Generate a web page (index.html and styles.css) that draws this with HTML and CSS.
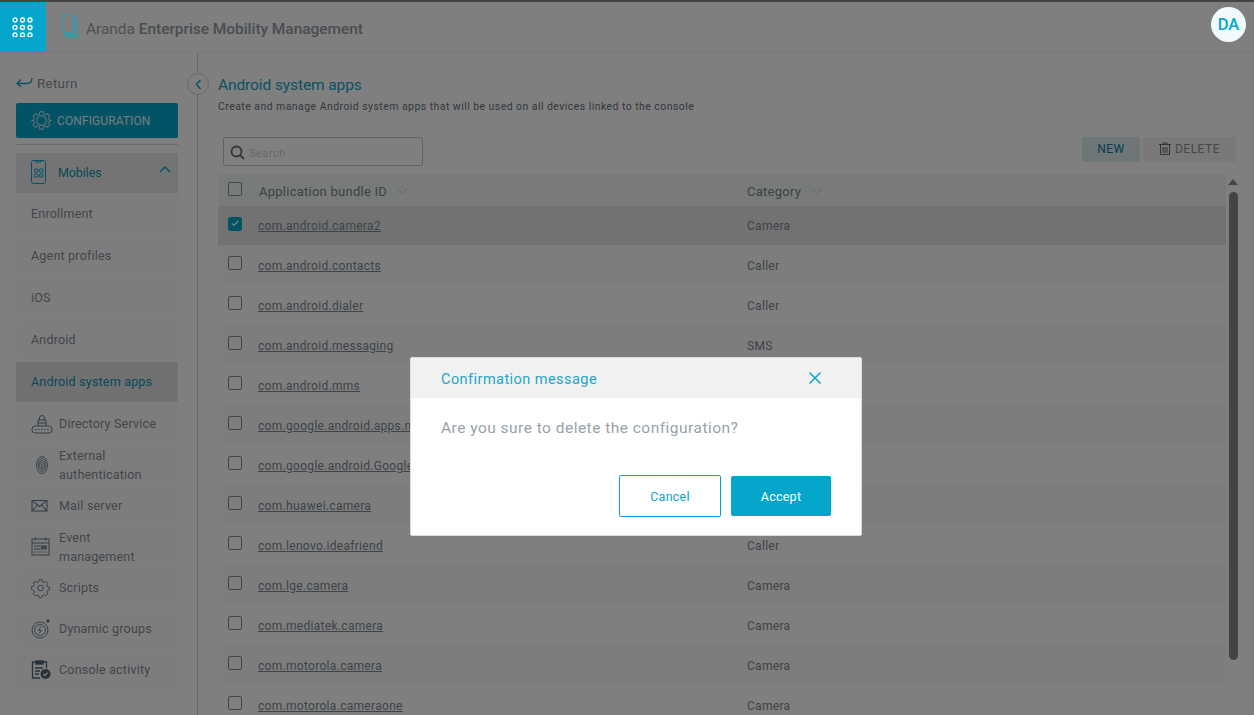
FILE: index.html
```html
<!DOCTYPE html>
<html lang="en">
<head>
<meta charset="utf-8">
<title>Android system apps</title>
<link rel="stylesheet" href="styles.css">
</head>
<body>
<div class="app">
  <header class="topbar">
    <div class="apps-btn">
      <svg width="24" height="20" viewBox="0 0 24 20" fill="none" stroke="#fff" stroke-width="1.3"><circle cx="4" cy="3" r="2"/><circle cx="11.500" cy="3" r="2"/><circle cx="19" cy="3" r="2"/><circle cx="4" cy="10.500" r="2"/><circle cx="11.500" cy="10.500" r="2"/><circle cx="19" cy="10.500" r="2"/><circle cx="4" cy="18" r="2"/><circle cx="11.500" cy="18" r="2"/><circle cx="19" cy="18" r="2"/></svg>
    </div>
    <svg class="logo" width="16" height="23" viewBox="0 0 16 23" fill="none" stroke="#2a9dba" stroke-width="1"><rect x=".5" y=".5" width="10" height="18" rx="1.500"/><path d="M11 2.500h1.500a.8.8 0 0 1 .8.800v16.200a.8.8 0 0 1-.8.800H3.200a.8.8 0 0 1-.8-.8V19M13.500 4.500h.8a.8.8 0 0 1 .8.800v17H4.500V21"/></svg>
    <div class="brand">Aranda <b>Enterprise Mobility Management</b></div>
    <div class="avatar">DA</div>
  </header>
  <div class="layout">
    <aside class="sidebar">
      <a class="return"><svg width="17" height="12" viewBox="0 0 17 12" fill="none" stroke="#06a6cc" stroke-width="1.300"><path d="M16 1c0 4-2 5.500-5 5.500H1M5 2.500 1 6.500l4 3.500"/></svg>Return</a>
      <div class="config">
        <svg width="21" height="21" viewBox="0 0 24 24" fill="none" stroke="#cfe5ec" stroke-width="1.300"><circle cx="12" cy="12" r="5.500"/><path d="M10 1h4l.7 3 2.400 1 2.600-1.600 2.900 2.900L21 8.900l1 2.400 2 .7-2 .7-1 2.400 1.600 2.600-2.900 2.900-2.600-1.600-2.400 1-.7 3h-4l-.7-3-2.400-1-2.600 1.600-2.900-2.900L3 15.100l-1-2.400-2-.7 2-.7 1-2.400-1.600-2.600 2.900-2.900L6.900 5l2.400-1z" transform="translate(1.200 1.200) scale(.9)"/></svg>
        CONFIGURATION
      </div>
      <hr class="rule">
      <nav class="menu">
        <div class="item group">
          <svg class="ico" width="16" height="25" viewBox="0 0 16 25" fill="none" stroke="#06a6cc" stroke-width="1"><rect x=".5" y=".5" width="14" height="23" rx="2"/><path d="M5 .5v1.500h5V.5"/><rect x="3.500" y="9" width="3.500" height="3" rx=".5"/><rect x="8.500" y="9" width="3.500" height="3" rx=".5"/><rect x="3.500" y="14" width="3.500" height="3" rx=".5"/><rect x="8.500" y="14" width="3.500" height="3" rx=".5"/></svg>
          <span>Mobiles</span>
          <svg class="chev" width="12" height="7" viewBox="0 0 12 7" fill="none" stroke="#06a6cc" stroke-width="1.500"><path d="M1 6l5-5 5 5"/></svg>
        </div>
        <div class="item sub">Enrollment</div>
        <div class="item sub">Agent profiles</div>
        <div class="item sub">iOS</div>
        <div class="item sub">Android</div>
        <div class="item sub current">Android system apps</div>
        <div class="item tool">
          <svg class="ico" width="22" height="20" viewBox="0 0 22 20" fill="none" stroke="#667c8c" stroke-width="1"><rect x="1" y="12" width="20" height="7" rx="3"/><path d="M4 15.500h14" stroke-dasharray="1.500 1.500"/><path d="M7 12V6h8v6M8.500 6V4a2.500 2.500 0 0 1 5 0v2M7 9h8"/></svg>
          <span>Directory Service</span>
        </div>
        <div class="item tool">
          <svg class="ico" width="22" height="20" viewBox="0 0 22 20" fill="none" stroke="#667c8c" stroke-width=".9"><ellipse cx="11" cy="10" rx="5.500" ry="8.500"/><ellipse cx="11" cy="10" rx="3.800" ry="6.500"/><ellipse cx="11" cy="10" rx="2.200" ry="4.500"/><path d="M11 7v7"/></svg>
          <span>External<br>authentication</span>
        </div>
        <div class="item tool">
          <svg class="ico" width="22" height="20" viewBox="0 0 22 20" fill="none" stroke="#667c8c" stroke-width="1.100"><rect x="1" y="4.500" width="15" height="10.500"/><path d="M1 4.500l7.500 6 7.500-6M1 15l5.500-6M16 15l-5.500-6"/></svg>
          <span>Mail server</span>
        </div>
        <div class="item tool">
          <svg class="ico" width="22" height="20" viewBox="0 0 22 20" fill="none" stroke="#667c8c" stroke-width="1"><rect x="1" y="2" width="17" height="16"/><path d="M1 6h17M4.500 .5v3M14.500 .5v3M3 9h13M3 12h13" /><path d="M3 15h13" stroke-dasharray="1.500 1"/><path d="M10 10.500h6" stroke-width="2"/></svg>
          <span>Event<br>management</span>
        </div>
        <div class="item tool">
          <svg class="ico" width="22" height="20" viewBox="0 0 22 20" fill="none" stroke="#667c8c" stroke-width="1"><circle cx="9.500" cy="10" r="2.800"/><path d="M8 1h3l.5 2.200 1.800.8 2-1.200 2.100 2.100-1.200 2 .8 1.800 2.200.5v3l-2.200.5-.8 1.800 1.200 2-2.100 2.100-2-1.200-1.800.8-.5 2.200H8l-.5-2.200-1.800-.8-2 1.200-2.100-2.100 1.200-2-.8-1.800L-.2 11.500v-3l2.200-.5.8-1.800-1.200-2L3.900 2.800l2 1.200 1.800-.8z" transform="translate(.8 .8) scale(.92)"/></svg>
          <span>Scripts</span>
        </div>
        <div class="item tool">
          <svg class="ico" width="22" height="20" viewBox="0 0 22 20" fill="none" stroke="#667c8c" stroke-width=".9"><circle cx="9" cy="11" r="8"/><circle cx="9" cy="11" r="5.500"/><path d="M10 7.500 7.500 11.500h3L8 14.500"/><circle cx="17" cy="2" r="1.200" fill="#667c8c"/></svg>
          <span>Dynamic groups</span>
        </div>
        <div class="item tool">
          <svg class="ico" width="22" height="20" viewBox="0 0 22 20" fill="none" stroke="#4d6478" stroke-width="1.300"><path d="M5 2H1.500v16H9M12 2h3.500v6"/><rect x="5" y="1" width="7" height="3" fill="#4d6478"/><path d="M4 8h8M4 11h5M4 14h4"/><circle cx="14.500" cy="14" r="5" fill="#4d6478" stroke="none"/><path d="M12.300 14l1.600 1.600 2.800-3" stroke="#fff"/></svg>
          <span>Console activity</span>
        </div>
      </nav>
    </aside>
    <main class="content">
      <h1 class="title">Android system apps</h1>
      <p class="lead">Create and manage Android system apps that will be used on all devices linked to the console</p>
      <div class="toolbar">
        <label class="search">
          <svg width="15" height="15" viewBox="0 0 15 15" fill="none" stroke="#5f6e78" stroke-width="1.800"><circle cx="6.500" cy="6.500" r="5"/><path d="M10.300 10.300 14 14"/></svg>
          <span>Search</span>
        </label>
        <div class="actions">
          <button class="btn btn-new">NEW</button>
          <button class="btn btn-del">
            <svg width="12" height="13" viewBox="0 0 12 13" fill="none" stroke="#666" stroke-width="1"><path d="M0 2.500h12M4 2.500V1h4v1.500M1.500 2.500V12.500h9V2.500M4 5v6M6 5v6M8 5v6"/></svg>
            DELETE
          </button>
        </div>
      </div>
      <div class="tablewrap">
        <div class="table">
          <div class="row head">
            <span class="check"></span>
            <span class="col-a">Application bundle ID <svg width="11" height="6" viewBox="0 0 11 6" fill="none" stroke="#c8cfcf" stroke-width="1"><path d="M.5.500l5 5 5-5"/></svg></span>
            <span class="col-b">Category <svg width="11" height="6" viewBox="0 0 11 6" fill="none" stroke="#c8cfcf" stroke-width="1"><path d="M.5.500l5 5 5-5"/></svg></span>
          </div>
          <div class="row selected">
            <span class="check on"><svg width="8" height="7" viewBox="0 0 8 7" fill="none" stroke="#fff" stroke-width="1.200"><path d="M.8 3.500l2.200 2L7.200 1"/></svg></span>
            <a class="col-a">com.android.camera2</a><span class="col-b">Camera</span>
          </div>
          <div class="row"><span class="check"></span><a class="col-a">com.android.contacts</a><span class="col-b">Caller</span></div>
          <div class="row"><span class="check"></span><a class="col-a">com.android.dialer</a><span class="col-b">Caller</span></div>
          <div class="row"><span class="check"></span><a class="col-a">com.android.messaging</a><span class="col-b">SMS</span></div>
          <div class="row"><span class="check"></span><a class="col-a">com.android.mms</a><span class="col-b">SMS</span></div>
          <div class="row"><span class="check"></span><a class="col-a">com.google.android.apps.nexuslauncher</a><span class="col-b">SMS</span></div>
          <div class="row"><span class="check"></span><a class="col-a">com.google.android.GoogleCamera</a><span class="col-b">Camera</span></div>
          <div class="row"><span class="check"></span><a class="col-a">com.huawei.camera</a><span class="col-b">Camera</span></div>
          <div class="row"><span class="check"></span><a class="col-a">com.lenovo.ideafriend</a><span class="col-b">Caller</span></div>
          <div class="row"><span class="check"></span><a class="col-a">com.lge.camera</a><span class="col-b">Camera</span></div>
          <div class="row"><span class="check"></span><a class="col-a">com.mediatek.camera</a><span class="col-b">Camera</span></div>
          <div class="row"><span class="check"></span><a class="col-a">com.motorola.camera</a><span class="col-b">Camera</span></div>
          <div class="row"><span class="check"></span><a class="col-a">com.motorola.cameraone</a><span class="col-b">Camera</span></div>
        </div>
        <div class="scrollbar"><i class="arrow"></i><i class="thumb"></i></div>
      </div>
    </main>
  </div>
</div>
<button class="collapse"><svg width="7" height="11" viewBox="0 0 7 11" fill="none" stroke="#06a6cc" stroke-width="1.500"><path d="M5.500 1 1.500 5.500l4 4.500"/></svg></button>
<div class="backdrop">
  <section class="modal">
    <div class="modal-head">
      <span>Confirmation message</span>
      <svg width="14" height="14" viewBox="0 0 14 14" fill="none" stroke="#06a6cc" stroke-width="1.500"><path d="M1.500 1.500l11 11M12.500 1.500l-11 11"/></svg>
    </div>
    <p class="modal-body">Are you sure to delete the configuration?</p>
    <div class="modal-foot">
      <button class="mbtn cancel">Cancel</button>
      <button class="mbtn accept">Accept</button>
    </div>
  </section>
</div>
</body>
</html>
```
FILE: styles.css
```css
* { box-sizing: border-box; }
html, body { margin: 0; height: 100%; overflow: hidden; }
body { font-family: Roboto, "Liberation Sans", sans-serif; color: #5d6b78; background: #fff; }
.app { height: 715px; display: flex; flex-direction: column; overflow: hidden; border-top: 2px solid #888; }
.topbar { height: 51px; flex: none; display: flex; align-items: center; border-bottom: 1px solid #eef1f5; }
.apps-btn { width: 46px; height: 50px; background: #06a6cc; display: flex; align-items: center; justify-content: center; position: relative; z-index: 20; }
.logo { margin-left: 16px; margin-top: -4px; position: relative; z-index: 20; flex: none; }
.brand { margin-left: 8px; margin-top: 4px; font-size: 15.500px; color: #9aa2ab; letter-spacing: -.05px; }
.brand b { font-weight: 500; color: #939ba4; }
.avatar { margin-left: auto; margin-right: 8px; margin-top: -5px; width: 35px; height: 35px; border-radius: 50%; background: #f0fafd; color: #06a6cc; font-size: 16.500px; font-weight: 500; display: flex; align-items: center; justify-content: center; position: relative; z-index: 20; }
.layout { flex: 1; display: flex; min-height: 0; }
.sidebar { width: 198px; flex: none; border-right: 1px solid #d4d4d4; padding: 20px 19px 0 16px; }
.return { display: flex; align-items: center; gap: 4px; height: 20px; font-size: 13.500px; color: #8a939c; letter-spacing: .2px; }
.config { margin-top: 10px; height: 35px; background: #06a6cc; border-radius: 2px; display: flex; align-items: center; gap: 5px; padding-left: 15px; color: #e6f6fa; font-size: 12px; letter-spacing: .1px; }
.rule { margin: 6px 0 8px; border: 0; border-top: 1px solid #d6d6d6; }
.menu { display: flex; flex-direction: column; }
.item { height: 40px; margin-bottom: 2px; display: flex; align-items: center; padding-left: 15px; gap: 6px; background: #fafbfb; border-radius: 2px; font-size: 12.500px; line-height: 19px; letter-spacing: .2px; color: #848d96; }
.item.sub, .item.group { padding-bottom: 2px; }
.item.tool { height: 39px; }
.item .ico { flex: none; }
.item.group { background: #e8e8ea; color: #0a93b5; gap: 11px; margin-bottom: 1px; letter-spacing: -.1px; }
.item.group .chev { margin-left: auto; margin-right: 7px; margin-top: -5px; }
.item.current { background: #e2e2e4; color: #0a93b5; }
.content { flex: 1; min-width: 0; padding: 22px 0 0 20px; }
.title { margin: 0; font-size: 15.500px; font-weight: 400; line-height: 20px; color: #13a4c6; letter-spacing: -.1px; }
.lead { margin: 5px 0 0; font-size: 10.500px; line-height: 14px; color: #66717d; letter-spacing: .44px; }
.toolbar { margin-top: 23px; height: 37px; display: flex; justify-content: space-between; padding: 0 18px 0 5px; }
.search { width: 200px; height: 29px; border: 1px solid #c3c6c8; border-radius: 2px; display: flex; align-items: center; gap: 4px; padding: 2px 0 0 6px; font-size: 11px; color: #d0d3d5; letter-spacing: .5px; }
.search span { margin-top: 2px; }
.actions { display: flex; gap: 3px; }
.btn { height: 25px; border: 0; border-radius: 2px; font: inherit; font-size: 12px; letter-spacing: .5px; padding: 0 0 2px; display: flex; align-items: center; justify-content: center; gap: 4px; }
.btn-new { width: 58px; background: #dcecef; color: #087f9c; }
.btn-del { width: 93px; background: #f0f2f1; color: #8f8f8f; }
.tablewrap { display: flex; height: 560px; }
.table { width: 1008px; flex: none; }
.row { height: 40px; display: flex; align-items: center; padding: 2px 0 0 10px; font-size: 12px; letter-spacing: .3px; color: #7c8791; }
.row:nth-child(even) { background: #fff; }
.row:nth-child(odd) { background: #fafbfb; }
.row.head { height: 32px; background: #f3f7f6; font-size: 13px; color: #77828c; padding-top: 1px; letter-spacing: .25px; }
.row.head .check { margin-top: -4px; }
.row.head .col-a { margin-left: 17px; width: 488px; }
.row.head .col-a, .row.head .col-b { margin-top: 1px; }
.row.selected { background: #e4e5e7; height: 39px; padding-top: 0; }
.row.selected .check { margin-top: -4px; }
.check { width: 14px; height: 14px; flex: none; border: 1px solid #78909f; border-radius: 2px; margin-top: -6px; display: flex; align-items: center; justify-content: center; }
.check.on { background: #06a6cc; border-color: #06a6cc; }
.col-a { width: 489px; margin-left: 16px; flex: none; display: flex; align-items: center; gap: 10px; }
a.col-a { display: block; text-decoration: underline; white-space: nowrap; }
.col-b { display: flex; align-items: center; gap: 10px; }
.scrollbar { width: 10px; margin-left: 2px; display: flex; flex-direction: column; align-items: center; padding-top: 5px; gap: 7px; }
.arrow { width: 0; height: 0; border: 5px solid transparent; border-top: 0; border-bottom: 6px solid #888; }
.thumb { width: 9px; height: 468px; background: #888; border-radius: 5px; }
.collapse { position: absolute; left: 187px; top: 73px; width: 22px; height: 22px; padding: 0; border: 1px solid #d4d4d4; border-radius: 50%; background: #fff; display: flex; align-items: center; justify-content: center; }
.backdrop { position: fixed; inset: 0; background: rgba(0,0,0,.5); z-index: 10; padding: 357px 0 0 410px; }
.modal { width: 452px; height: 179px; background: #fff; border: 1px solid #ddd; border-radius: 2px; }
.modal-head { height: 40px; background: #f1f1f1; display: flex; align-items: center; justify-content: space-between; padding: 0 39px 0 30px; font-size: 14.500px; color: #1fa6c8; letter-spacing: .45px; }
.modal-head span { margin-top: 2px; }
.modal-body { margin: 0; padding: 20px 0 0 30px; font-size: 15.500px; line-height: 20px; color: #98a2ab; letter-spacing: .48px; }
.modal-foot { margin-top: 37px; display: flex; justify-content: flex-end; gap: 10px; padding-right: 30px; align-items: center; }
.mbtn { height: 40px; border-radius: 2px; font: inherit; font-size: 12.500px; letter-spacing: .25px; padding: 0; }
.cancel { width: 102px; height: 42px; background: #fff; border: 1px solid #06a6cc; color: #06a6cc; }
.accept { width: 100px; background: #06a6cc; border: 0; color: #fff; }
```
